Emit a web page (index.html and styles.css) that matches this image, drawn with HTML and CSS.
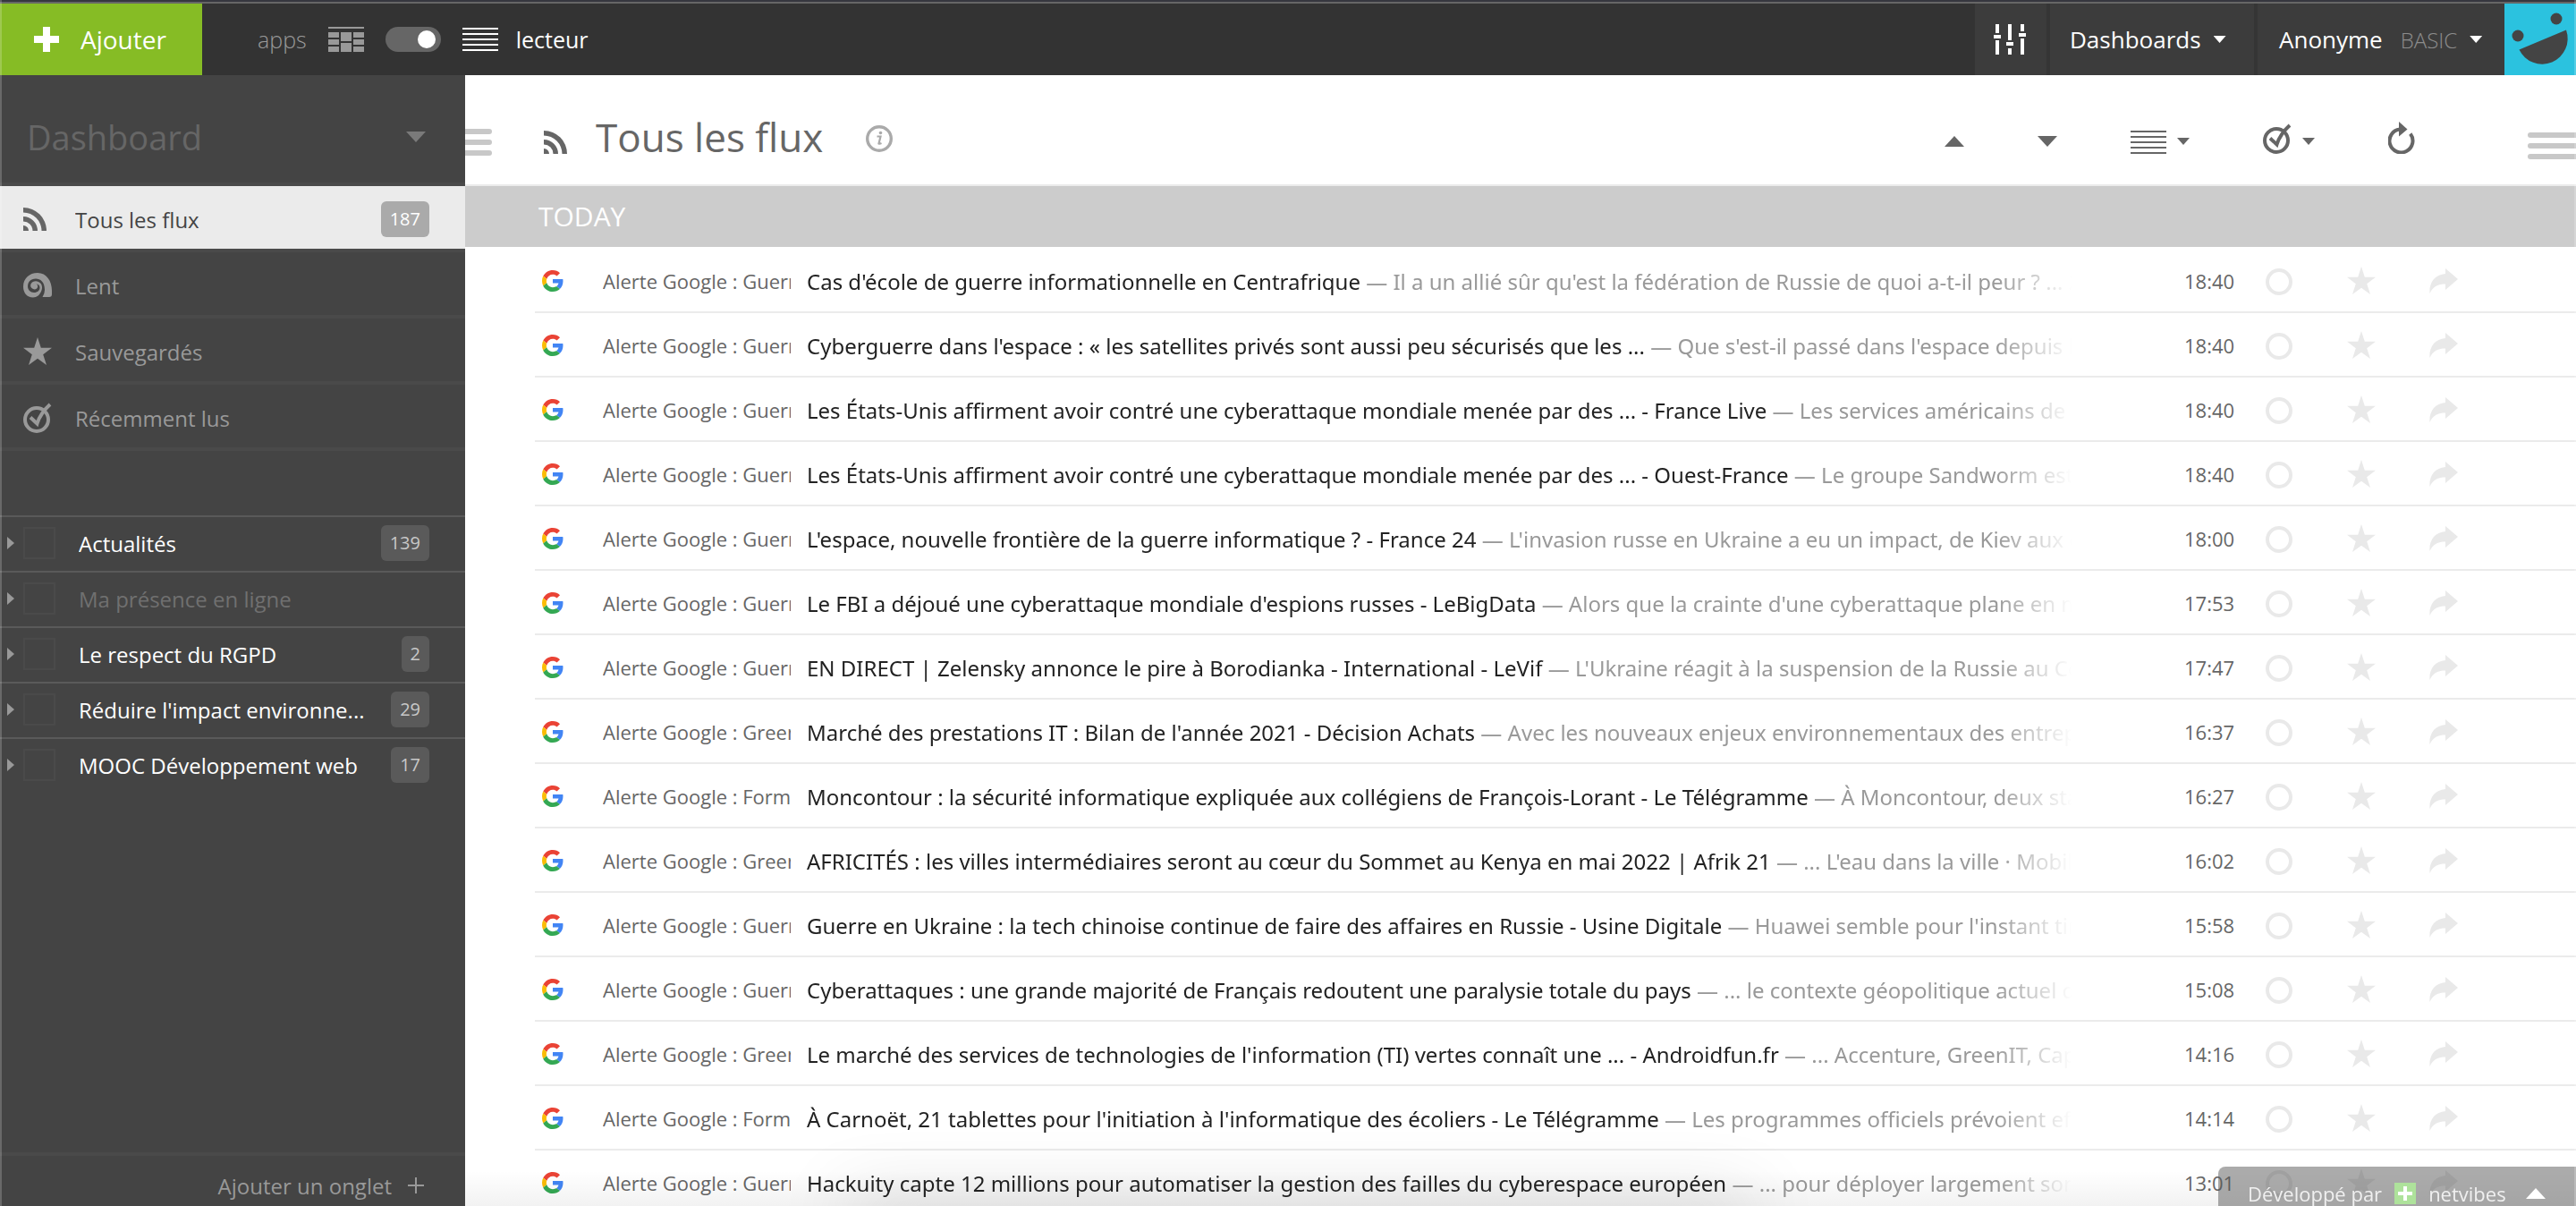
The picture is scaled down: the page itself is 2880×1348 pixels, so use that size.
FILE: index.html
```
<!DOCTYPE html>
<html lang="fr">
<head>
<meta charset="utf-8">
<meta name="viewport" content="width=device-width, initial-scale=1">
<title>Tous les flux</title>
<link rel="stylesheet" href="styles.css">
</head>
<body>
<svg class="sprite" aria-hidden="true">
  <symbol id="rss" viewBox="0 0 26 26"><path d="M0 0A26 26 0 0 1 26 26H20.500A20.500 20.500 0 0 0 0 5.500ZM0 10A16 16 0 0 1 16 26H10.500A10.500 10.500 0 0 0 0 15.500ZM0 20A6 6 0 0 1 6 26H0Z" fill="currentColor"/></symbol>
  <symbol id="star" viewBox="0 0 32 32"><path d="M16 0L19.800 11.800H32L22.200 19.200L26 31L16 23.800L6 31L9.800 19.200L0 11.800H12.200Z" fill="currentColor"/></symbol>
  <symbol id="check" viewBox="0 0 32 34"><g fill="none" stroke="currentColor" stroke-width="4"><circle cx="15" cy="19" r="13"/><path d="M8 16.500L15.500 23.500Q19 12 30 2"/></g></symbol>
  <symbol id="circle" viewBox="0 0 32 32"><circle cx="16" cy="17" r="13" fill="none" stroke="currentColor" stroke-width="4"/></symbol>
  <symbol id="share" viewBox="0 0 32 32"><path d="M18 2L32 14L18 26V19.500C10 19.500 4 22 0.500 30C-.5 18 6 9 18 8Z" fill="currentColor"/></symbol>
  <symbol id="lines" viewBox="0 0 40 26"><path d="M0 1H40M0 7H40M0 13H40M0 19H40M0 25H40" stroke="currentColor" stroke-width="2"/></symbol>
  <symbol id="google" viewBox="0 0 48 48">
    <path fill="#EA4335" d="M24 9.500c3.540 0 6.710 1.220 9.210 3.600l6.850-6.850C35.900 2.380 30.470 0 24 0 14.620 0 6.510 5.380 2.560 13.220l7.980 6.190C12.430 13.720 17.740 9.500 24 9.500z"/>
    <path fill="#4285F4" d="M46.980 24.550c0-1.570-.15-3.090-.38-4.550H24v9.020h12.940c-.58 2.960-2.260 5.480-4.780 7.180l7.730 6c4.510-4.180 7.090-10.360 7.090-17.650z"/>
    <path fill="#FBBC05" d="M10.530 28.590c-.48-1.450-.76-2.990-.76-4.590s.27-3.140.76-4.590l-7.980-6.190C.92 16.460 0 20.120 0 24c0 3.880.92 7.540 2.560 10.780l7.970-6.190z"/>
    <path fill="#34A853" d="M24 48c6.480 0 11.930-2.130 15.890-5.810l-7.730-6c-2.150 1.450-4.920 2.300-8.160 2.300-6.260 0-11.570-4.220-13.470-9.910l-7.980 6.190C6.510 42.620 14.620 48 24 48z"/>
  </symbol>
</svg>

<header class="topbar">
  <button class="add" type="button"><svg width="28" height="28" viewBox="0 0 28 28"><path d="M10 0h8v10h10v8H18v10h-8V18H0v-8h10z" fill="#fff"/></svg>Ajouter</button>
  <div class="mode">
    <span class="mode-off">apps</span>
    <svg width="40" height="28" viewBox="0 0 40 28" fill="#999"><path d="M0 0h40v2H0zM0 6h12v6H0zM14 6h12v10H14zM28 6h12v6H28zM0 14h12v6H0zM28 14h12v6H28zM0 22h12v6H0zM14 18h12v10H14zM28 22h12v6H28z"/></svg>
    <input class="switch" type="checkbox" role="switch" checked aria-label="Mode lecteur">
    <svg class="mode-on" width="40" height="26"><use href="#lines"/></svg>
    <span class="mode-on mode-name">lecteur</span>
  </div>
  <nav class="account">
    <button class="seg settings" type="button" aria-label="Réglages"><svg width="36" height="34" viewBox="0 0 36 34" fill="#fff"><path d="M2 0h4v10H2zM0 12h8v4H0zM2 18h4v16H2zM16 0h4v18h-4zM14 20h8v4h-8zM16 27h4v7h-4zM30 0h4v8h-4zM28 10h8v4h-8zM30 16h4v18h-4z"/></svg></button>
    <button class="seg boards" type="button">Dashboards<i class="caret"></i></button>
    <button class="seg user" type="button">Anonyme<span class="plan">BASIC</span><i class="caret"></i></button>
    <a class="avatar" href="#" aria-label="Profil"><svg width="80" height="80" viewBox="0 0 80 80"><rect width="80" height="80" fill="#2bc2df"/><g fill="#444"><circle cx="15" cy="36" r="6.500"/><circle cx="58" cy="17" r="6.500"/><path d="M16.500 51.500L69 29.500A28.500 28.500 0 0 1 16.500 51.500Z"/></g></svg></a>
  </nav>
</header>

<div class="layout">
  <aside class="sidebar">
    <button class="board" type="button">Dashboard<i class="caret caret-large"></i></button>
    <nav class="views">
      <a class="view active" href="#"><svg class="view-icon" width="26" height="26"><use href="#rss"/></svg><span class="label">Tous les flux</span><span class="badge">187</span></a>
      <a class="view" href="#"><svg class="view-icon" width="32" height="28" viewBox="0 0 32 28"><path d="M16 0C26 0 32 9 32 20V24Q32 27 29 27H21.500Q24 23 24 19C24 10 19 6.500 14 6.500C8 6.500 5 10.500 5 15C5 19 8 22 12 22C16 22 18.500 19.500 18.500 16.500C18.500 14 16.500 12.500 14.500 12.500C16 13 16.500 14.500 16 16C15.500 18 13 19 11 18C8.500 17 7.500 14.500 8.500 12.500C10 9.500 14 8.500 17 10C20.500 11.500 22 15.500 20.500 19.500C19 24.500 15 27.500 11 27.500C4 27.500 0 22 0 15.500C0 6 7 0 16 0Z" fill="currentColor"/></svg><span class="label">Lent</span></a>
      <a class="view" href="#"><svg class="view-icon" width="32" height="32"><use href="#star"/></svg><span class="label">Sauvegardés</span></a>
      <a class="view" href="#"><svg class="view-icon" width="32" height="34"><use href="#check"/></svg><span class="label">Récemment lus</span></a>
    </nav>
    <ul class="tabs">
      <li class="tab"><i class="expand"></i><i class="tab-icon"></i><a class="label" href="#">Actualités</a><span class="badge">139</span></li>
      <li class="tab empty"><i class="expand"></i><i class="tab-icon"></i><a class="label" href="#">Ma présence en ligne</a></li>
      <li class="tab"><i class="expand"></i><i class="tab-icon"></i><a class="label" href="#">Le respect du RGPD</a><span class="badge">2</span></li>
      <li class="tab"><i class="expand"></i><i class="tab-icon"></i><a class="label" href="#">Réduire l'impact environne...</a><span class="badge">29</span></li>
      <li class="tab"><i class="expand"></i><i class="tab-icon"></i><a class="label" href="#">MOOC Développement web</a><span class="badge">17</span></li>
    </ul>
    <button class="new-tab" type="button">Ajouter un onglet<svg width="18" height="18" viewBox="0 0 18 18"><path d="M9 0V18M0 9H18" stroke="currentColor" stroke-width="2"/></svg></button>
  </aside>

  <main class="reader">
    <div class="toolbar">
      <button class="handle handle-left" type="button" aria-label="Masquer le menu"><i></i><i></i><i></i></button>
      <svg class="feed-icon" width="26" height="26"><use href="#rss"/></svg>
      <h1>Tous les flux</h1>
      <button class="tool info" type="button" aria-label="Informations"><svg width="30" height="30" viewBox="0 0 30 30"><circle cx="15" cy="15" r="13.300" fill="none" stroke="#aaa" stroke-width="3.400"/><circle cx="16.500" cy="8.500" r="1.800" fill="#aaa"/><path d="M12.500 12.500H16.500L14.500 20.500Q15.500 21 17.500 20" fill="none" stroke="#aaa" stroke-width="2.200"/></svg></button>
      <div class="tools">
        <button class="tool arrow" type="button" aria-label="Précédent"><svg width="22" height="12" viewBox="0 0 22 12"><path d="M11 0L22 12H0z" fill="currentColor"/></svg></button>
        <button class="tool arrow" type="button" aria-label="Suivant"><svg width="22" height="12" viewBox="0 0 22 12"><path d="M0 0H22L11 12z" fill="currentColor"/></svg></button>
        <button class="tool" type="button" aria-label="Affichage"><svg width="40" height="26"><use href="#lines"/></svg><i class="caret"></i></button>
        <button class="tool" type="button" aria-label="Marquer comme lu"><svg width="32" height="34"><use href="#check"/></svg><i class="caret"></i></button>
        <button class="tool" type="button" aria-label="Actualiser"><svg width="30" height="36" viewBox="0 0 30 36"><path d="M13 8.500A13 13 0 1 0 24.800 13.500" fill="none" stroke="currentColor" stroke-width="4"/><path d="M12 0L21.500 8.500L12 16.500z" fill="currentColor"/></svg></button>
      </div>
      <button class="handle handle-right" type="button" aria-label="Masquer le panneau"><i></i><i></i><i></i></button>
    </div>
    <h2>TODAY</h2>
    <ol class="items">
      <li class="item"><svg class="favicon"><use href="#google"/></svg><span class="source">Alerte Google : Guerre</span><a class="text" href="#">Cas d'école de guerre informationnelle en Centrafrique <span>— Il a un allié sûr qu'est la fédération de Russie de quoi a-t-il peur ? ... 2022</span></a><time>18:40</time><button type="button" aria-label="Lu"><svg><use href="#circle"/></svg></button><button type="button" aria-label="Sauvegarder"><svg><use href="#star"/></svg></button><button type="button" aria-label="Partager"><svg><use href="#share"/></svg></button></li>
      <li class="item"><svg class="favicon"><use href="#google"/></svg><span class="source">Alerte Google : Guerre</span><a class="text" href="#">Cyberguerre dans l'espace : « les satellites privés sont aussi peu sécurisés que les ... <span>— Que s'est-il passé dans l'espace depuis le début</span></a><time>18:40</time><button type="button" aria-label="Lu"><svg><use href="#circle"/></svg></button><button type="button" aria-label="Sauvegarder"><svg><use href="#star"/></svg></button><button type="button" aria-label="Partager"><svg><use href="#share"/></svg></button></li>
      <li class="item"><svg class="favicon"><use href="#google"/></svg><span class="source">Alerte Google : Guerre</span><a class="text" href="#">Les États-Unis affirment avoir contré une cyberattaque mondiale menée par des ... - France Live <span>— Les services américains de contre</span></a><time>18:40</time><button type="button" aria-label="Lu"><svg><use href="#circle"/></svg></button><button type="button" aria-label="Sauvegarder"><svg><use href="#star"/></svg></button><button type="button" aria-label="Partager"><svg><use href="#share"/></svg></button></li>
      <li class="item"><svg class="favicon"><use href="#google"/></svg><span class="source">Alerte Google : Guerre</span><a class="text" href="#">Les États-Unis affirment avoir contré une cyberattaque mondiale menée par des ... - Ouest-France <span>— Le groupe Sandworm est accusé</span></a><time>18:40</time><button type="button" aria-label="Lu"><svg><use href="#circle"/></svg></button><button type="button" aria-label="Sauvegarder"><svg><use href="#star"/></svg></button><button type="button" aria-label="Partager"><svg><use href="#share"/></svg></button></li>
      <li class="item"><svg class="favicon"><use href="#google"/></svg><span class="source">Alerte Google : Guerre</span><a class="text" href="#">L'espace, nouvelle frontière de la guerre informatique ? - France 24 <span>— L'invasion russe en Ukraine a eu un impact, de Kiev aux confins</span></a><time>18:00</time><button type="button" aria-label="Lu"><svg><use href="#circle"/></svg></button><button type="button" aria-label="Sauvegarder"><svg><use href="#star"/></svg></button><button type="button" aria-label="Partager"><svg><use href="#share"/></svg></button></li>
      <li class="item"><svg class="favicon"><use href="#google"/></svg><span class="source">Alerte Google : Guerre</span><a class="text" href="#">Le FBI a déjoué une cyberattaque mondiale d'espions russes - LeBigData <span>— Alors que la crainte d'une cyberattaque plane en mondial</span></a><time>17:53</time><button type="button" aria-label="Lu"><svg><use href="#circle"/></svg></button><button type="button" aria-label="Sauvegarder"><svg><use href="#star"/></svg></button><button type="button" aria-label="Partager"><svg><use href="#share"/></svg></button></li>
      <li class="item"><svg class="favicon"><use href="#google"/></svg><span class="source">Alerte Google : Guerre</span><a class="text" href="#">EN DIRECT | Zelensky annonce le pire à Borodianka - International - LeVif <span>— L'Ukraine réagit à la suspension de la Russie au Conseil</span></a><time>17:47</time><button type="button" aria-label="Lu"><svg><use href="#circle"/></svg></button><button type="button" aria-label="Sauvegarder"><svg><use href="#star"/></svg></button><button type="button" aria-label="Partager"><svg><use href="#share"/></svg></button></li>
      <li class="item"><svg class="favicon"><use href="#google"/></svg><span class="source">Alerte Google : Green</span><a class="text" href="#">Marché des prestations IT : Bilan de l'année 2021 - Décision Achats <span>— Avec les nouveaux enjeux environnementaux des entreprises</span></a><time>16:37</time><button type="button" aria-label="Lu"><svg><use href="#circle"/></svg></button><button type="button" aria-label="Sauvegarder"><svg><use href="#star"/></svg></button><button type="button" aria-label="Partager"><svg><use href="#share"/></svg></button></li>
      <li class="item"><svg class="favicon"><use href="#google"/></svg><span class="source">Alerte Google : Form</span><a class="text" href="#">Moncontour : la sécurité informatique expliquée aux collégiens de François-Lorant - Le Télégramme <span>— À Moncontour, deux stagiaires</span></a><time>16:27</time><button type="button" aria-label="Lu"><svg><use href="#circle"/></svg></button><button type="button" aria-label="Sauvegarder"><svg><use href="#star"/></svg></button><button type="button" aria-label="Partager"><svg><use href="#share"/></svg></button></li>
      <li class="item"><svg class="favicon"><use href="#google"/></svg><span class="source">Alerte Google : Green</span><a class="text" href="#">AFRICITÉS : les villes intermédiaires seront au cœur du Sommet au Kenya en mai 2022 | Afrik 21 <span>— ... L'eau dans la ville · Mobilité</span></a><time>16:02</time><button type="button" aria-label="Lu"><svg><use href="#circle"/></svg></button><button type="button" aria-label="Sauvegarder"><svg><use href="#star"/></svg></button><button type="button" aria-label="Partager"><svg><use href="#share"/></svg></button></li>
      <li class="item"><svg class="favicon"><use href="#google"/></svg><span class="source">Alerte Google : Guerre</span><a class="text" href="#">Guerre en Ukraine : la tech chinoise continue de faire des affaires en Russie - Usine Digitale <span>— Huawei semble pour l'instant tirer</span></a><time>15:58</time><button type="button" aria-label="Lu"><svg><use href="#circle"/></svg></button><button type="button" aria-label="Sauvegarder"><svg><use href="#star"/></svg></button><button type="button" aria-label="Partager"><svg><use href="#share"/></svg></button></li>
      <li class="item"><svg class="favicon"><use href="#google"/></svg><span class="source">Alerte Google : Guerre</span><a class="text" href="#">Cyberattaques : une grande majorité de Français redoutent une paralysie totale du pays <span>— ... le contexte géopolitique actuel doit</span></a><time>15:08</time><button type="button" aria-label="Lu"><svg><use href="#circle"/></svg></button><button type="button" aria-label="Sauvegarder"><svg><use href="#star"/></svg></button><button type="button" aria-label="Partager"><svg><use href="#share"/></svg></button></li>
      <li class="item"><svg class="favicon"><use href="#google"/></svg><span class="source">Alerte Google : Green</span><a class="text" href="#">Le marché des services de technologies de l'information (TI) vertes connaît une ... - Androidfun.fr <span>— ... Accenture, GreenIT, Capgemini</span></a><time>14:16</time><button type="button" aria-label="Lu"><svg><use href="#circle"/></svg></button><button type="button" aria-label="Sauvegarder"><svg><use href="#star"/></svg></button><button type="button" aria-label="Partager"><svg><use href="#share"/></svg></button></li>
      <li class="item"><svg class="favicon"><use href="#google"/></svg><span class="source">Alerte Google : Form</span><a class="text" href="#">À Carnoët, 21 tablettes pour l'initiation à l'informatique des écoliers - Le Télégramme <span>— Les programmes officiels prévoient effectivement</span></a><time>14:14</time><button type="button" aria-label="Lu"><svg><use href="#circle"/></svg></button><button type="button" aria-label="Sauvegarder"><svg><use href="#star"/></svg></button><button type="button" aria-label="Partager"><svg><use href="#share"/></svg></button></li>
      <li class="item"><svg class="favicon"><use href="#google"/></svg><span class="source">Alerte Google : Guerre</span><a class="text" href="#">Hackuity capte 12 millions pour automatiser la gestion des failles du cyberespace européen <span>— ... pour déployer largement son offre</span></a><time>13:01</time><button type="button" aria-label="Lu"><svg><use href="#circle"/></svg></button><button type="button" aria-label="Sauvegarder"><svg><use href="#star"/></svg></button><button type="button" aria-label="Partager"><svg><use href="#share"/></svg></button></li>
    </ol>
  </main>
</div>

<footer class="brand">Développé par<svg class="brand-logo" width="24" height="24" viewBox="0 0 24 24"><rect width="24" height="24" fill="#aee29b"/><path d="M10 4h4v6h6v4h-6v6h-4v-6H4v-4h6z" fill="#fff"/></svg><a href="#">netvibes</a><svg class="brand-up" width="22" height="12" viewBox="0 0 22 12"><path d="M11 0L22 12H0z" fill="#fff"/></svg></footer>
</body>
</html>
```
FILE: styles.css
```
* { box-sizing: border-box; }

body {
  margin: 0;
  height: 100vh;
  display: flex;
  flex-direction: column;
  overflow: hidden;
  background: #fff;
  color: #333;
  font-family: "Open Sans", "Noto Sans", sans-serif;
  font-size: 24px;
}

/* thin light line down both sides of the window */
body::after {
  content: "";
  position: fixed;
  inset: 0;
  border: solid rgba(255, 255, 255, .2);
  border-width: 0 2px;
  pointer-events: none;
}

button {
  margin: 0;
  padding: 0;
  border: 0;
  background: none;
  color: inherit;
  font: inherit;
  text-align: left;
  cursor: pointer;
}
a { color: inherit; text-decoration: none; }
svg { display: block; flex: none; }
ul, ol { margin: 0; padding: 0; list-style: none; }
h1, h2 { margin: 0; font-weight: 400; }

.sprite { position: absolute; width: 0; height: 0; }

.caret {
  flex: none;
  width: 14px;
  height: 8px;
  background: currentColor;
  clip-path: polygon(0 0, 100% 0, 50% 100%);
}
.caret-large { width: 22px; height: 12px; background: #7a7a7a; }

/* top bar */
.topbar {
  flex: none;
  display: flex;
  height: 84px;
  border-top: 2px solid #36373f;
  box-shadow: inset 0 2px #666;
  padding-top: 2px;
  background: #333;
  color: #fff;
}
.add {
  display: flex;
  align-items: center;
  gap: 24px;
  width: 226px;
  padding-left: 38px;
  background: #86bc25;
  font-size: 28px;
  font-weight: 500;
}
.mode {
  display: flex;
  align-items: center;
  gap: 24px;
  padding-left: 62px;
  font-size: 25px;
}
.mode-off { color: #999; font-weight: 300; }
.mode-name { margin-left: -4px; }
.switch {
  appearance: none;
  display: flex;
  align-items: center;
  justify-content: flex-end;
  width: 62px;
  height: 28px;
  margin: 0;
  padding: 0 6px;
  border-radius: 14px;
  background: #666;
}
.switch::before {
  content: "";
  width: 20px;
  height: 20px;
  border-radius: 50%;
  background: #fff;
}
.account { display: flex; margin-left: auto; font-size: 26px; }
.seg {
  display: flex;
  align-items: center;
  border-right: 4px solid #353535;
  background: #3c3c3c;
}
.settings { width: 84px; padding-left: 21px; }
.boards { width: 232px; padding-left: 22px; gap: 14px; }
.user { width: 276px; padding-left: 24px; gap: 14px; border-right: 0; }
.plan { margin-left: 6px; color: #8c8c8c; font-size: 24px; font-weight: 300; }

/* page body */
.layout {
  flex: 1;
  min-height: 0;
  display: grid;
  grid-template-columns: 520px minmax(0, 1fr);
}

/* sidebar */
.sidebar {
  display: flex;
  flex-direction: column;
  min-height: 0;
  background: #444;
  color: #999;
}
.board {
  flex: none;
  display: flex;
  align-items: center;
  justify-content: space-between;
  height: 124px;
  padding: 18px 44px 0 30px;
  border-bottom: 4px solid #4a4a4a;
  color: #666;
  font-size: 38px;
}
.view {
  display: grid;
  grid-template-columns: 58px minmax(0, 1fr) auto;
  align-items: center;
  height: 74px;
  padding: 4px 40px 0 26px;
  border-bottom: 4px solid #4a4a4a;
}
.active { background: #ebebeb; color: #444; }
.active .view-icon { color: #666; }
.badge {
  height: 40px;
  padding: 0 10px;
  border-radius: 6px;
  background: #5a5a5a;
  color: #c8c8c8;
  font-size: 20px;
  line-height: 40px;
}
.active .badge { background: #aaa; color: #fff; }
.label { overflow: hidden; white-space: nowrap; }
.tabs { margin-top: 72px; }
.tab {
  display: grid;
  grid-template-columns: 18px 62px minmax(0, 1fr) auto;
  align-items: center;
  height: 62px;
  padding: 0 40px 2px 8px;
  border-top: 2px solid #5a5a5a;
  color: #fff;
}
.empty { color: #707070; }
.expand {
  width: 8px;
  height: 14px;
  background: #999;
  clip-path: polygon(0 0, 100% 50%, 0 100%);
}
.tab-icon { width: 36px; height: 36px; border: 2px solid #4a4a4a; }
.new-tab {
  flex: none;
  display: flex;
  align-items: center;
  justify-content: flex-end;
  gap: 18px;
  height: 60px;
  margin-top: auto;
  padding: 10px 46px 0 0;
  border-top: 4px solid #4a4a4a;
}

/* reader */
.reader { position: relative; min-height: 0; overflow: hidden; }
.toolbar {
  display: flex;
  align-items: center;
  height: 124px;
  padding-top: 28px;
  border-bottom: 2px solid #ebebeb;
  color: #666;
}
.handle { display: grid; gap: 6px; }
.handle i { height: 6px; background: #c8c8c8; }
.handle-left { width: 30px; }
.handle-left i { border-radius: 0 3px 3px 0; }
.handle-right { width: 54px; padding-top: 8px; }
.handle-right i { border-radius: 3px 0 0 3px; }
.feed-icon { margin: 0 32px 0 58px; }
.toolbar h1 { padding-bottom: 12px; font-size: 44px; }
.tool { display: flex; align-items: flex-end; gap: 12px; }
.tool .caret { margin-bottom: 10px; }
.arrow { padding-bottom: 8px; }
.info { margin-left: 48px; padding-bottom: 8px; }
.tools {
  display: flex;
  align-items: flex-end;
  gap: 82px;
  margin: 0 126px 0 auto;
  padding-bottom: 10px;
}
.reader h2 {
  height: 68px;
  padding-left: 82px;
  background: #ccc;
  color: #fff;
  font-size: 30px;
  font-weight: 500;
  line-height: 68px;
}
.items { margin-left: 78px; padding-top: 2px; }
.item {
  display: grid;
  grid-template-columns: 68px 210px minmax(0, 1fr) 90px 92px 92px 32px;
  align-items: center;
  height: 72px;
  padding: 2px 132px 0 8px;
  border-bottom: 2px solid #ebebeb;
}
.favicon { width: 24px; height: 24px; }
.source { overflow: hidden; color: #666; font-size: 22px; white-space: nowrap; }
.text {
  margin: 0 126px 0 18px;
  overflow: hidden;
  color: #222;
  font-family: "Noto Sans", "Open Sans", sans-serif;
  white-space: nowrap;
  -webkit-mask-image: linear-gradient(to right, #000 calc(100% - 84px), transparent);
  mask-image: linear-gradient(to right, #000 calc(100% - 84px), transparent);
}
.text span { color: #999; }
.item time { color: #666; font-size: 22px; }
.item button { color: #e9e9e9; }
.item button svg { width: 32px; height: 32px; }

/* soft shades rising from the lower edge of the reader */
.reader::before {
  content: "";
  position: absolute;
  top: 100%;
  left: 18%;
  width: 43%;
  height: 20px;
  box-shadow: 0 0 80px rgba(0, 0, 0, .3);
  pointer-events: none;
}
.reader::after {
  content: "";
  position: absolute;
  inset: auto 0 0;
  height: 40px;
  background: linear-gradient(transparent, rgba(0, 0, 0, .05));
  pointer-events: none;
}

/* brand tab */
.brand {
  position: fixed;
  right: 0;
  bottom: 0;
  display: flex;
  align-items: center;
  width: 400px;
  height: 44px;
  padding: 16px 34px 0 33px;
  border-radius: 8px 0 0;
  background: rgba(87, 87, 87, .5);
  color: #f0f0f0;
  font-size: 22px;
}
.brand-logo { margin: 0 14px; }
.brand-up { margin-left: auto; }
```
